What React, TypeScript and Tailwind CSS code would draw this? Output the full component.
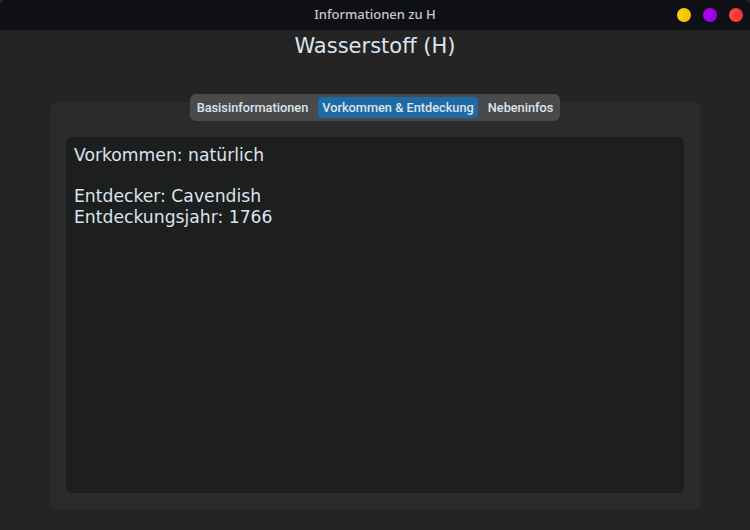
import React, { useState } from 'react';

const TABS = ['Basisinformationen', 'Vorkommen & Entdeckung', 'Nebeninfos'];

export default function App() {
  const [active, setActive] = useState(1);

  return (
    <div className="w-[750px] h-[530px] flex flex-col bg-[#242424] overflow-hidden">
      {/* Titelleiste */}
      <div className="relative h-[30px] shrink-0 bg-[#0f1015] rounded-t-[6px] flex items-center justify-center">
        <span className="text-[13px] font-medium text-[#c9c9cc] font-['Noto_Sans',sans-serif]">Informationen zu H</span>
        <div className="absolute right-[7px] top-0 h-full flex items-center gap-[12px]">
          <span className="w-[14px] h-[14px] rounded-full bg-gradient-to-r from-[#ffd60a] to-[#f5b800]" />
          <span className="w-[14px] h-[14px] rounded-full bg-gradient-to-r from-[#b000ee] to-[#9600e6]" />
          <span className="w-[14px] h-[14px] rounded-full bg-gradient-to-r from-[#ff4a3d] to-[#f0303a]" />
        </div>
      </div>

      {/* Überschrift */}
      <div className="h-[34px] flex items-center justify-center">
        <h1 className="text-[21px] text-[#dce4ee] font-['DejaVu_Sans',sans-serif]">Wasserstoff (H)</h1>
      </div>

      <div className="flex flex-col items-center mt-[30px]">
        {/* Tab-Leiste */}
        <div className="relative z-10 flex items-center gap-[6px] h-[27px] px-[3px] bg-[#4a4a4a] rounded-[6px] font-['Roboto',sans-serif] text-[12.75px] font-medium text-[#dce4ee]">
          {TABS.map((t, i) => (
            <button
              key={t}
              onClick={() => setActive(i)}
              className={`h-[21px] px-[4px] pt-[1px] rounded-[4px] leading-none ${i === active ? 'bg-[#1f6aa5]' : ''}`}
            >
              {t}
            </button>
          ))}
        </div>

        {/* Panel */}
        <div className="w-[650px] h-[408px] -mt-[19px] bg-[#2b2b2b] rounded-[6px] pt-[35px] px-[16px] pb-[17px] flex flex-col">
          <div className="flex-1 bg-[#1d1e1e] rounded-[6px] px-[8px] pt-[8px] font-['DejaVu_Sans',sans-serif] text-[17.2px] leading-[20.5px] text-[#dce4ee]">
            <p>Vorkommen: natürlich</p>
            <p>&nbsp;</p>
            <p>Entdecker: Cavendish</p>
            <p>Entdeckungsjahr: 1766</p>
          </div>
        </div>
      </div>
    </div>
  );
}
